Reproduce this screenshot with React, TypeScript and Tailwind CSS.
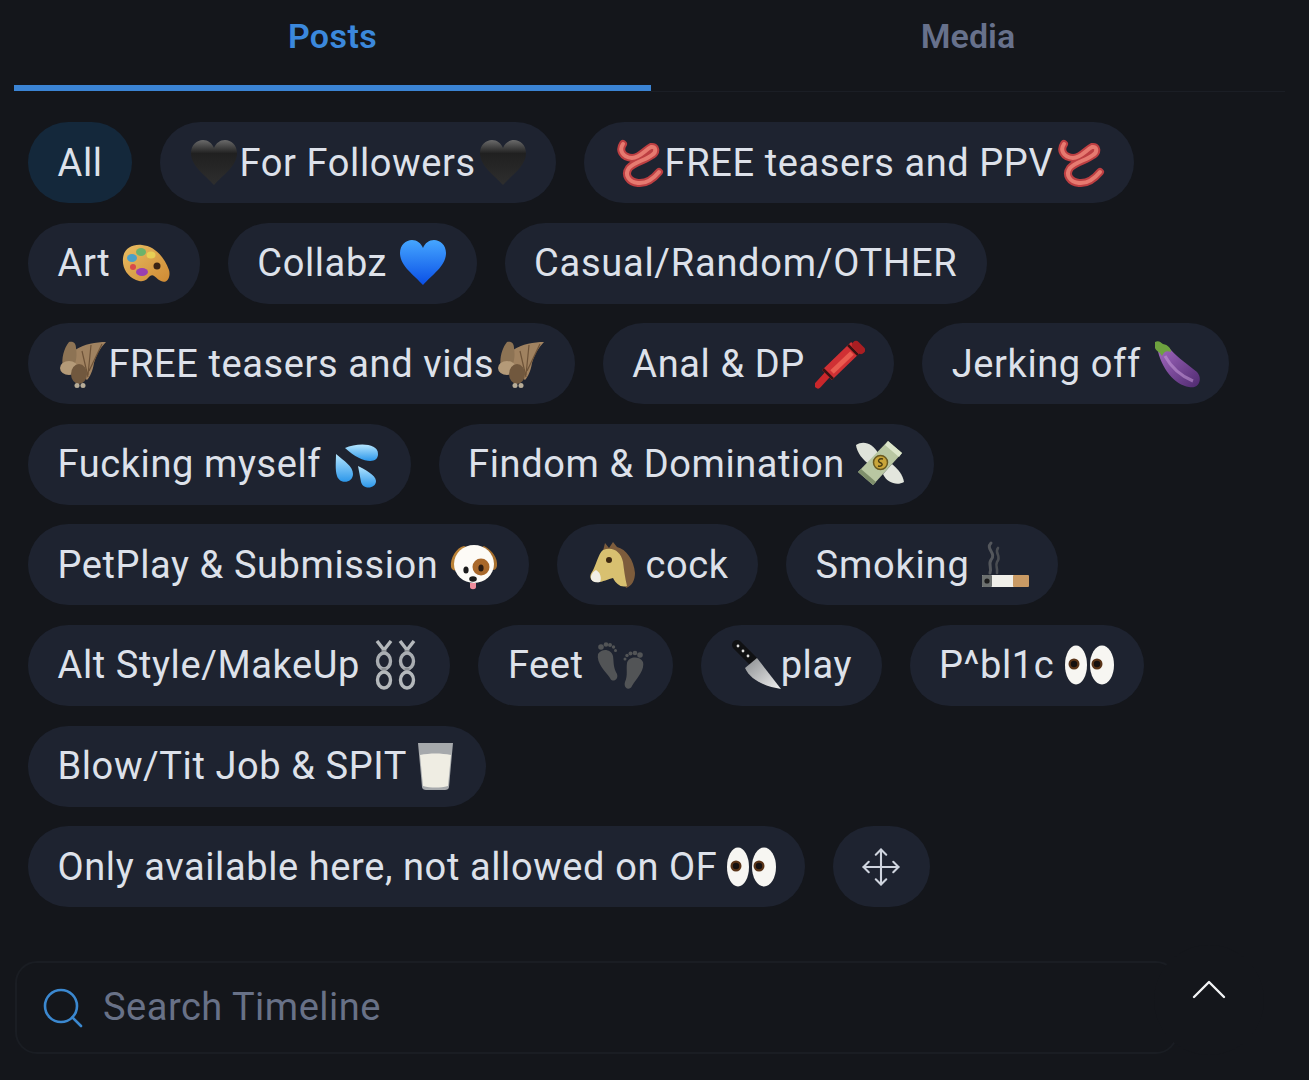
import React from "react";
import { Move, Search } from "lucide-react";

type P = { cls?: string };
const Box = ({ cls = "", children, defs }: P & { children: React.ReactNode; defs?: React.ReactNode }) => (
  <svg viewBox="0 0 50 50" className={`h-[50px] w-[50px] shrink-0 ${cls}`}>
    {defs && <defs>{defs}</defs>}
    {children}
  </svg>
);
const heartPath = "M25 47C16 37 2 28 2 15C2 7 8 2 14 2C19 2 23 5 25 10C27 5 31 2 36 2C42 2 48 7 48 15C48 28 34 37 25 47Z";
const BlackHeart = ({ cls }: P) => (
  <Box cls={cls} defs={<linearGradient id="bh" x1="0" y1="0" x2="0" y2="1"><stop offset="0" stopColor="#6a6a6a" /><stop offset=".3" stopColor="#202020" /><stop offset="1" stopColor="#2e2e2e" /></linearGradient>}>
    <path d={heartPath} fill="url(#bh)" />
  </Box>
);
const BlueHeart = ({ cls }: P) => (
  <Box cls={cls} defs={<linearGradient id="blh" x1="0" y1="0" x2="0" y2="1"><stop offset="0" stopColor="#45a6ff" /><stop offset="1" stopColor="#0a4fe6" /></linearGradient>}>
    <path d={heartPath} fill="url(#blh)" />
  </Box>
);
const wormD = "M9 6C5 12 8 19 18 20C26 20 31 12 37 9C42 8 43 14 38 17C32 22 20 24 15 30C10 37 15 44 24 45C33 46 40 40 45 34";
const Worm = ({ cls }: P) => (
  <Box cls={cls}>
    <path d={wormD} fill="none" stroke="#bd3f42" strokeWidth="8" strokeLinecap="round" strokeLinejoin="round" />
    <path d={wormD} fill="none" stroke="#e67a70" strokeWidth="4" strokeLinecap="round" strokeLinejoin="round" />
  </Box>
);
const Palette = ({ cls }: P) => (
  <Box cls={cls} defs={<linearGradient id="pal" x1="0" y1="0" x2="1" y2="1"><stop offset="0" stopColor="#e8bd62" /><stop offset="1" stopColor="#cf8a34" /></linearGradient>}>
    <path d="M2 20C3 10 12 6 21 7C33 8 43 18 48 32C50 39 46 46 40 43C35 41 33 35 29 38C25 42 23 45 15 42C6 38 1 30 2 20Z" fill="url(#pal)" />
    <ellipse cx="11" cy="20" rx="5" ry="4" fill="#4aa0c8" />
    <ellipse cx="20" cy="14" rx="5" ry="4" fill="#6cb36a" />
    <ellipse cx="30" cy="17" rx="4.5" ry="3.5" fill="#e7cf55" />
    <ellipse cx="36" cy="28" rx="3.5" ry="3.5" fill="#3b2414" />
    <ellipse cx="21" cy="34" rx="6" ry="4" fill="#9a3fb0" />
    <ellipse cx="12" cy="29" rx="3" ry="3" fill="#d94a4a" />
  </Box>
);
const Bat = ({ cls }: P) => (
  <Box cls={cls}>
    <path d="M17 11C26 5 38 3 48 3C42 9 38 16 36 24C35 31 32 38 29 41L16 30Z" fill="#a08260" />
    <path d="M24 12L30 38M33 6L30 36M44 5L31 32" stroke="#6e5338" strokeWidth="1.2" fill="none" />
    <path d="M11 3C16 2 18 5 18 9C19 15 19 24 14 30L5 28C3 20 6 9 11 3Z" fill="#8d7354" />
    <ellipse cx="11" cy="29" rx="9" ry="7" fill="#b49a78" />
    <ellipse cx="21" cy="35" rx="8" ry="10" fill="#71583e" />
    <ellipse cx="19" cy="46.5" rx="2.5" ry="2.5" fill="#b8ad98" />
    <ellipse cx="25" cy="46.5" rx="2.5" ry="2.5" fill="#b8ad98" />
  </Box>
);
const Crayon = ({ cls }: P) => (
  <Box cls={cls}>
    <path d="M3 46L13 35" stroke="#c9272b" strokeWidth="7" strokeLinecap="round" />
    <path d="M12 36L41 8" stroke="#d03034" strokeWidth="14" />
    <path d="M17 33L37 14" stroke="#ea5c50" strokeWidth="5" />
    <path d="M8 30L18 40" stroke="#3a1212" strokeWidth="2.5" />
    <path d="M33 6L43 16" stroke="#3a1212" strokeWidth="2.5" />
    <path d="M41 6L46 11" stroke="#a91e22" strokeWidth="8" strokeLinecap="round" />
  </Box>
);
const Eggplant = ({ cls }: P) => (
  <Box cls={cls} defs={<linearGradient id="egg" x1="0" y1="0" x2="1" y2="1"><stop offset="0" stopColor="#a56ac2" /><stop offset="1" stopColor="#4f2a70" /></linearGradient>}>
    <path d="M6 8C12 5 17 7 20 11C27 19 39 27 46 33C52 40 48 50 38 48C24 46 10 30 6 8Z" fill="url(#egg)" />
    <path d="M14 17C20 28 30 37 42 42" stroke="#c79ad8" strokeWidth="3" fill="none" opacity=".55" />
    <path d="M4 3C8 1 10 4 12 5C17 6 20 9 20 13C15 11 13 13 11 17C9 13 5 12 4 9Z" fill="#6ea23f" />
  </Box>
);
const Drops = ({ cls }: P) => (
  <Box cls={cls} defs={<linearGradient id="drp" x1="0" y1="0" x2="0" y2="1"><stop offset="0" stopColor="#b5e6ff" /><stop offset="1" stopColor="#2c97ea" /></linearGradient>}>
    <path d="M13 9C24 4 46 3 46 15C46 26 29 24 13 9Z" fill="url(#drp)" />
    <path d="M4 15C12 22 21 27 21 35C21 44 8 46 5 37C3 31 4 22 4 15Z" fill="url(#drp)" />
    <path d="M26 27C32 30 44 36 44 42C44 50 31 51 29 43C28 38 27 32 26 27Z" fill="url(#drp)" />
  </Box>
);
const Money = ({ cls }: P) => (
  <Box cls={cls}>
    <path d="M1 6C9 1 18 5 23 14L15 26C8 21 2 14 1 6Z" fill="#dfe3da" />
    <path d="M49 43C42 47 32 44 28 35L37 25C43 30 48 36 49 43Z" fill="#e3e6dd" />
    <path d="M33 2L47 14L18 46L3 33Z" fill="#b9c7a2" />
    <path d="M33 2L47 14L44 18L30 6Z" fill="#dde6cb" />
    <path d="M6 30L21 43L18 46L3 33Z" fill="#7f8f6c" />
    <circle cx="25.5" cy="23.5" r="7" fill="#c9a53a" stroke="#6a5a20" strokeWidth="1.5" />
    <path d="M28 20C24 19 22 22 25 23.5C29 25 27 28 23 27" stroke="#4a3d10" strokeWidth="1.4" fill="none" />
  </Box>
);
const Dog = ({ cls }: P) => (
  <Box cls={cls}>
    <path d="M15 6C7 8 1 18 2 27C3 31 8 32 11 27C13 22 15 14 20 8Z" fill="#bb8236" />
    <path d="M35 6C43 10 49 18 48 26C47 31 43 31 40 27C37 22 35 14 31 8Z" fill="#a8702e" />
    <ellipse cx="25" cy="24" rx="20" ry="19" fill="#fdfbf6" />
    <ellipse cx="32" cy="27" rx="8.5" ry="8.5" fill="#a9682a" />
    <ellipse cx="17" cy="30" rx="2.6" ry="3.6" fill="#1a1a1a" />
    <ellipse cx="32" cy="28" rx="2.6" ry="3.6" fill="#2a1a10" />
    <path d="M21 43H27V47C27 50 21 50 21 47Z" fill="#ef8d9c" />
    <ellipse cx="24" cy="39" rx="3.8" ry="2.8" fill="#1b1b1b" />
  </Box>
);
const Horse = ({ cls }: P) => (
  <Box cls={cls}>
    <path d="M15 11L17 3L21 8L25 2L29 7C38 9 46 20 47 33C47 40 44 46 38 48L26 14Z" fill="#7d5c3c" />
    <path d="M15 10C25 6 33 12 35 22C36 30 37 38 39 46C33 48 28 44 25 38C20 39 13 43 8 42C2 41 1 36 4 32C8 26 10 14 15 10Z" fill="#d8c070" />
    <path d="M8 30C12 32 14 38 12 42C8 43 2 42 3 36C4 33 6 31 8 30Z" fill="#f1efe6" />
    <circle cx="21" cy="20" r="3" fill="#3b2610" />
  </Box>
);
const Cig = ({ cls }: P) => (
  <Box cls={cls}>
    <path d="M11 3C5 9 17 13 11 20C8 24 12 27 10 33" stroke="#54575c" strokeWidth="3" fill="none" strokeLinecap="round" />
    <path d="M18 8C14 13 22 16 17 22C15 26 18 28 17 33" stroke="#4a4d52" strokeWidth="2.6" fill="none" strokeLinecap="round" />
    <rect x="2" y="35" width="33" height="12" rx="1" fill="#f0efe9" />
    <rect x="33" y="35" width="16" height="12" rx="1" fill="#c99a64" />
    <rect x="2" y="35" width="10" height="12" rx="1" fill="#6d7170" />
    <circle cx="7" cy="41" r="2.6" fill="#1d1d1d" />
  </Box>
);
const Chain = ({ x }: { x: number }) => (
  <g fill="none">
    <path d={`M${x - 7} 1L${x} 10L${x + 7} 1`} stroke="#b4b8bb" strokeWidth="3.4" />
    <path d={`M${x} 10V14`} stroke="#8a8e92" strokeWidth="5" />
    <ellipse cx={x} cy="21" rx="6.5" ry="8" stroke="#a9adb1" strokeWidth="3.4" />
    <path d={`M${x} 28V33`} stroke="#8a8e92" strokeWidth="5" />
    <ellipse cx={x} cy="40" rx="6.5" ry="8" stroke="#b4b8bb" strokeWidth="3.4" />
  </g>
);
const Chains = ({ cls }: P) => (
  <Box cls={cls}>
    <Chain x={13} />
    <Chain x={36} />
  </Box>
);
const Feet = ({ cls }: P) => (
  <Box cls={cls}>
    <g fill="#525456">
      <path d="M3 14C7 8 16 9 18 16C19 23 18 27 22 34C24 40 17 43 15 38C11 32 1 23 3 14Z" />
      <circle cx="6" cy="7" r="2.8" /><circle cx="11" cy="4.5" r="2.3" /><circle cx="15" cy="5" r="2" /><circle cx="18.5" cy="7" r="1.7" /><circle cx="20.5" cy="10.5" r="1.5" />
      <path d="M48 22C45 16 34 16 32 23C31 30 33 35 30 42C28 49 35 51 37 46C41 39 50 31 48 22Z" />
      <circle cx="45" cy="15" r="2.8" /><circle cx="40" cy="13" r="2.3" /><circle cx="35.5" cy="13.5" r="2" /><circle cx="32" cy="15.5" r="1.7" /><circle cx="30" cy="19" r="1.5" />
    </g>
  </Box>
);
const Knife = ({ cls }: P) => (
  <Box cls={cls} defs={<linearGradient id="knf" x1="0" y1="0" x2="1" y2="1"><stop offset="0" stopColor="#8a8d90" /><stop offset="1" stopColor="#f0f0f0" /></linearGradient>}>
    <path d="M6 5L22 21" stroke="#101113" strokeWidth="10" strokeLinecap="round" />
    <circle cx="7" cy="6" r="1.4" fill="#ddd" /><circle cx="12" cy="11" r="1.4" fill="#ddd" /><circle cx="17" cy="16" r="1.4" fill="#ddd" />
    <path d="M26 18L50 49C36 47 20 41 14 28Z" fill="url(#knf)" />
  </Box>
);
const Eyes = ({ cls }: P) => (
  <Box cls={cls}>
    <ellipse cx="12" cy="25" rx="11" ry="19.5" fill="#f7f6f2" />
    <ellipse cx="38" cy="25" rx="12" ry="19.5" fill="#f7f6f2" />
    <circle cx="10" cy="24" r="5.5" fill="#5a3418" /><circle cx="10" cy="24" r="3.2" fill="#151010" />
    <circle cx="33" cy="24" r="5.5" fill="#5a3418" /><circle cx="33" cy="24" r="3.2" fill="#151010" />
  </Box>
);
const Milk = ({ cls }: P) => (
  <Box cls={cls}>
    <path d="M8 2H43L39 46C39 48 37 49 35 49H16C14 49 12 48 12 46Z" fill="#a6a9ac" />
    <path d="M10 14C20 12 31 12 41 14L38 45C30 47 21 47 13 45Z" fill="#efede3" />
  </Box>
);

const Chip = ({ children, active }: { children: React.ReactNode; active?: boolean }) => (
  <div className={`flex h-[81px] shrink-0 items-center rounded-full px-[29.5px] ${active ? "bg-[#14283b]" : "bg-[#1e2330]"}`}>
    {children}
  </div>
);

export default function App() {
  return (
    <div
      className="relative h-[1080px] w-full overflow-hidden bg-[#14161b] text-[#dde1ea]"
      style={{ fontFamily: "Roboto, 'Liberation Sans', sans-serif" }}
    >
      <div className="mx-[14px] mr-[24px] flex">
        <div className="flex h-[91px] w-[637px] items-start justify-center border-b-[6px] border-[#3b84d4] pt-[14px] text-[34px] font-semibold leading-[44px] tracking-[0.4px] text-[#3b88dc]">
          Posts
        </div>
        <div className="flex h-[92px] flex-1 items-start justify-center border-b border-[#1b1e25] pt-[14px] text-[34px] font-semibold leading-[44px] text-[#67718c]">
          Media
        </div>
      </div>

      <div className="mt-[30px] flex flex-wrap gap-x-[28px] gap-y-[19.6px] px-[28px] text-[38px] leading-[44px] tracking-[0.6px]">
        <Chip active>All</Chip>
        <Chip><BlackHeart cls="-ml-[1px] mr-[1px]" />For Followers<BlackHeart cls="ml-[2px] -mr-[1px]" /></Chip>
        <Chip><Worm cls="mr-[1px]" />FREE teasers and PPV<Worm cls="ml-[2px] -mr-[1px]" /></Chip>
        <Chip>Art<Palette cls="ml-[11px] -mr-[1px]" /></Chip>
        <Chip>Collabz<BlueHeart cls="ml-[11px] -mr-[1px]" /></Chip>
        <Chip><span className="tracking-[0.75px]">Casual/Random/OTHER</span></Chip>
        <Chip><Bat cls="mr-[1px]" />FREE teasers and vids<Bat cls="ml-[2px] -mr-[1px]" /></Chip>
        <Chip>Anal &amp; DP<Crayon cls="ml-[10px]" /></Chip>
        <Chip>Jerking off<Eggplant cls="ml-[10px] -mr-[1px]" /></Chip>
        <Chip>Fucking myself<Drops cls="ml-[11px] -mr-[1px]" /></Chip>
        <Chip>Findom &amp; Domination<Money cls="ml-[10px]" /></Chip>
        <Chip>PetPlay &amp; Submission<Dog cls="ml-[11px]" /></Chip>
        <Chip><Horse cls="ml-[2px] mr-[7px]" />cock</Chip>
        <Chip><span className="tracking-[0.8px]">Smoking</span><Cig cls="ml-[10px] -mr-[1px]" /></Chip>
        <Chip>Alt Style/MakeUp<Chains cls="ml-[11px]" /></Chip>
        <Chip>Feet<Feet cls="ml-[11px] -mr-[1px]" /></Chip>
        <Chip><Knife />play</Chip>
        <Chip>P^bl1c<Eyes cls="ml-[10px]" /></Chip>
        <Chip>Blow/Tit Job &amp; SPIT<Milk cls="ml-[3px] -mr-[3px]" /></Chip>
        <Chip>Only available here, not allowed on OF<Eyes cls="ml-[9px] -mr-[1px]" /></Chip>
        <div className="flex h-[81px] w-[97px] items-center justify-center rounded-full bg-[#1e2330]">
          <Move size={42} strokeWidth={1.2} color="#cfd4de" />
        </div>
      </div>

      <div className="mx-[15px] mt-[54px] flex h-[93px] w-[1163px] items-center rounded-[22px] border-2 border-[#1a1d23] pl-[22px] tracking-[0.5px]">
        <Search size={48} strokeWidth={1.3} color="#3b88d0" />
        <span className="ml-[16px] text-[38px] text-[#687187]">Search Timeline</span>
      </div>

      <div className="absolute left-[1154px] top-[945px] flex h-[110px] w-[110px] justify-center rounded-full bg-[#14161b] pt-[34px]">
        <svg width="34" height="20" viewBox="0 0 34 20" fill="none" stroke="#f2f3f5" strokeWidth="2.4" strokeLinecap="round" strokeLinejoin="round">
          <path d="M2 18L17 3L32 18" />
        </svg>
      </div>
    </div>
  );
}
